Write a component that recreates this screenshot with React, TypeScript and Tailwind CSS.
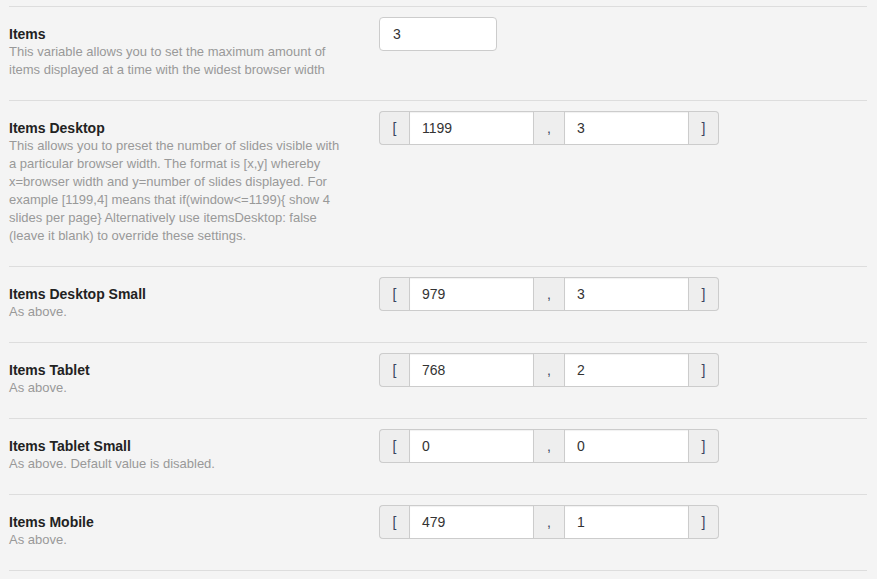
const rows = [
  {
    title: 'Items',
    desc: 'This variable allows you to set the maximum amount of items displayed at a time with the widest browser width',
    single: '3',
  },
  {
    title: 'Items Desktop',
    desc: 'This allows you to preset the number of slides visible with a particular browser width. The format is [x,y] whereby x=browser width and y=number of slides displayed. For example [1199,4] means that if(window<=1199){ show 4 slides per page} Alternatively use itemsDesktop: false (leave it blank) to override these settings.',
    pair: ['1199', '3'],
  },
  { title: 'Items Desktop Small', desc: 'As above.', pair: ['979', '3'] },
  { title: 'Items Tablet', desc: 'As above.', pair: ['768', '2'] },
  { title: 'Items Tablet Small', desc: 'As above. Default value is disabled.', pair: ['0', '0'] },
  { title: 'Items Mobile', desc: 'As above.', pair: ['479', '1'] },
]

function Addon({ children, side }: { children: string; side: 'l' | 'm' | 'r' }) {
  const round = side === 'l' ? 'rounded-l-[4px] border-l' : side === 'r' ? 'rounded-r-[4px] border-r' : ''
  return (
    <span
      className={`flex w-[30px] items-center justify-center border-y border-[#cccccc] bg-[#eeeeee] text-[14px] text-[#3a4460] ${round}`}
    >
      {children}
    </span>
  )
}

function Field({ value }: { value: string }) {
  return (
    <span className="flex w-[125px] items-center border border-[#cccccc] bg-white px-[12px] text-[14px] text-[#333] shadow-[inset_0_1px_1px_rgba(0,0,0,0.06)]">
      {value}
    </span>
  )
}

export default function App() {
  return (
    <div
      className="min-h-[579px] bg-[#f4f4f4] pl-[9px] pr-[10px] pt-[6px]"
      style={{ fontFamily: '"Liberation Sans", Arial, sans-serif' }}
    >
      {rows.map((row) => (
        <div key={row.title} className="flex border-t border-[#dddddd]">
          <div className="w-[370px] pr-[20px] pt-[18px] pb-[21px]">
            <div className="text-[14px] font-bold leading-[18px] text-[#222]">{row.title}</div>
            <p className="w-[340px] text-[13px] leading-[18px] text-[#999]">{row.desc}</p>
          </div>
          <div className="pt-[10px]">
            {row.single ? (
              <span className="flex h-[34px] w-[118px] items-center rounded-[4px] border border-[#cccccc] bg-white px-[13px] text-[14px] text-[#333]">
                {row.single}
              </span>
            ) : (
              <div className="flex h-[34px]">
                <Addon side="l">[</Addon>
                <Field value={row.pair![0]} />
                <Addon side="m">,</Addon>
                <Field value={row.pair![1]} />
                <Addon side="r">]</Addon>
              </div>
            )}
          </div>
        </div>
      ))}
      <div className="border-t border-[#dddddd]" />
    </div>
  )
}
